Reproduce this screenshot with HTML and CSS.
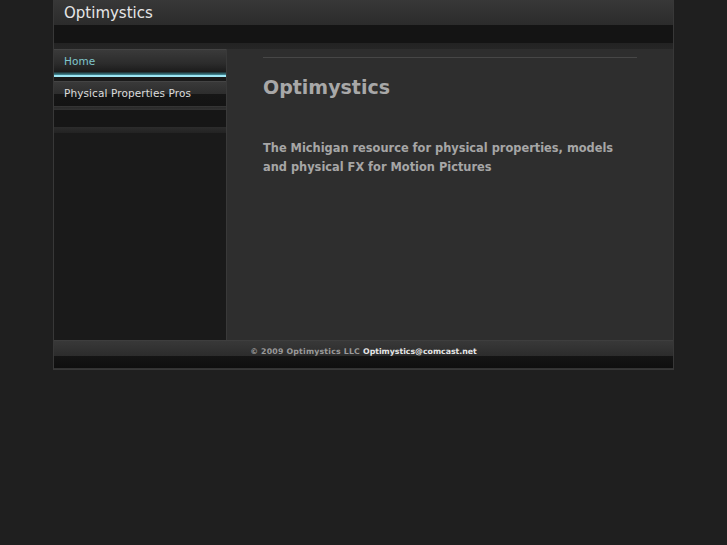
FILE: index.html
```html
<!DOCTYPE html>
<html>
<head>
<meta charset="utf-8">
<title>Optimystics</title>
<link rel="stylesheet" href="styles.css">
</head>
<body>
<div class="wrap">
  <div class="header">
    <div class="title-bar"><span class="site-title">Optimystics</span></div>
    <div class="header-dark"></div>
    <div class="header-base"></div>
  </div>
  <div class="main">
    <div class="sidebar">
      <div class="nav-item nav-active"><span>Home</span></div>
      <div class="nav-glow"></div>
      <div class="nav-gap"></div>
      <div class="nav-item"><span>Physical Properties Pros</span></div>
      <div class="nav-sep"></div>
      <div class="nav-empty"></div>
      <div class="nav-sep2"></div>
    </div>
    <div class="content">
      <div class="rule"></div>
      <h1 class="heading">Optimystics</h1>
      <p class="lead">The Michigan resource for physical properties, models and physical FX for Motion Pictures</p>
    </div>
  </div>
  <div class="footer">
    <div class="footer-top"><span class="copy">© 2009 Optimystics LLC</span> <span class="email">Optimystics@comcast.net</span></div>
    <div class="footer-dark"></div>
  </div>
</div>
</body>
</html>
```
FILE: styles.css
```css
html, body {
  margin: 0;
  padding: 0;
  background: #1f1f1f;
  font-family: "DejaVu Sans", Verdana, sans-serif;
}
.wrap {
  margin-left: 53px;
  width: 619px;
  border: 1px solid #383838;
  border-top: none;
  background: #1a1a1a;
}
.header {
  display: flex;
  flex-direction: column;
}
.title-bar {
  height: 25px;
  box-sizing: border-box;
  background: linear-gradient(#383838, #2b2b2b);
  padding: 6px 0 0 10px;
}
.site-title {
  color: #e6e6e6;
  font-size: 15px;
  line-height: 15px;
  display: block;
}
.header-dark {
  height: 18px;
  background: #141414;
}
.header-base {
  height: 6px;
  background: linear-gradient(#232323, #262626);
}
.main {
  display: flex;
  height: 291px;
}
.sidebar {
  width: 172px;
  background: #1a1a1a;
  display: flex;
  flex-direction: column;
}
.nav-item {
  height: 23px;
  display: flex;
  align-items: center;
  padding-left: 10px;
  padding-bottom: 1px;
  box-sizing: border-box;
  font-size: 10.5px;
  letter-spacing: 0.1px;
  color: #dcdcdc;
  background: linear-gradient(#393939 0%, #2d2d2d 55%, #161616 56%, #141414 100%);
  border-top: 1px solid #444;
}
.nav-active {
  color: #7fc6cc;
  background: linear-gradient(#3a3a3a 0%, #2c2c2c 60%, #1b1b1b 100%);
}
.nav-glow {
  height: 5px;
  background: linear-gradient(#1b2a2c, #3e7f8a 50%, #96e4f4 60%, #a6eaf6 100%);
}
.nav-gap {
  height: 4px;
  background: #1a1a1a;
}
.nav-sep {
  height: 6px;
  background: linear-gradient(#141414 0%, #141414 30%, #3a3a3a 31%, #2a2a2a 60%, #333 100%);
}
.nav-empty {
  height: 17px;
  background: #161616;
}
.nav-sep2 {
  height: 6px;
  background: linear-gradient(#2c2c2c, #232323);
}
.content {
  flex: 1;
  background: #2e2e2e;
  border-left: 1px solid #393939;
  padding: 8px 36px 0 36px;
}
.rule {
  height: 1px;
  background: #474747;
}
.heading {
  margin: 18px 0 0 0;
  font-size: 19px;
  line-height: 22px;
  color: #a8a8a8;
  font-weight: bold;
}
.lead {
  margin: 41px 0 0 0;
  font-size: 11.4px;
  line-height: 19px;
  font-weight: bold;
  color: #a6a6a6;
}
.footer {
  display: flex;
  flex-direction: column;
}
.footer-top {
  height: 16px;
  box-sizing: border-box;
  padding-top: 7px;
  background: linear-gradient(#383838, #2c2c2c);
  border-top: 1px solid #3e3e3e;
  display: flex;
  justify-content: center;
  align-items: flex-start;
  font-size: 7.8px;
  font-weight: bold;
  line-height: 1;
  gap: 3px;
}
.copy {
  color: #9a9a9a;
  letter-spacing: 0.2px;
}
.email {
  color: #e6e6e6;
}
.footer-dark {
  height: 12px;
  background: linear-gradient(#151515, #0f0f0f);
  border-bottom: 1px solid #333;
}
```
